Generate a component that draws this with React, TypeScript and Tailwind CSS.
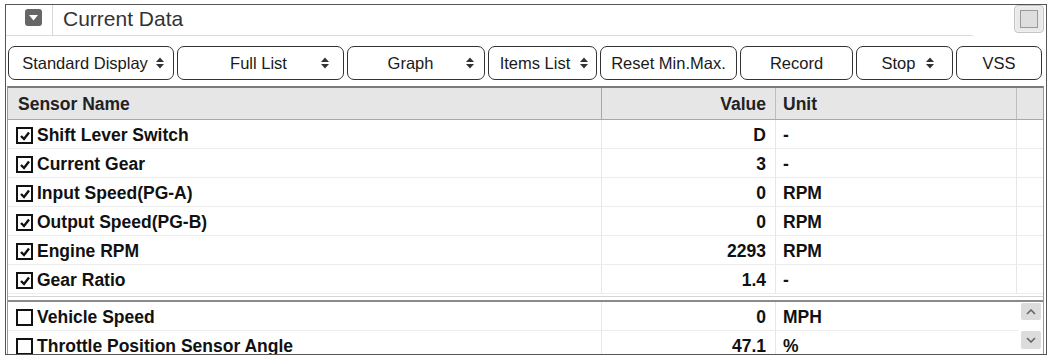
import React from 'react'

type Btn = { label: string; w: string; pad: string; arrow?: boolean }

const buttons: Btn[] = [
  { label: 'Standard Display', w: 'w-[166px]', pad: 'pl-[9px] pr-[9px]', arrow: true },
  { label: 'Full List', w: 'w-[167px]', pad: 'pl-[22px] pr-[14px]', arrow: true },
  { label: 'Graph', w: 'w-[138px]', pad: 'pl-[11px] pr-[10px]', arrow: true },
  { label: 'Items List', w: 'w-[109px]', pad: 'pl-[5px] pr-[8px]', arrow: true },
  { label: 'Reset Min.Max.', w: 'w-[137px]', pad: 'px-[4px]' },
  { label: 'Record', w: 'w-[113px]', pad: 'px-[4px]' },
  { label: 'Stop', w: 'w-[97px]', pad: 'pl-[18px] pr-[18px]', arrow: true },
  { label: 'VSS', w: 'w-[86px]', pad: 'px-[4px]' },
]

const rows = [
  { name: 'Shift Lever Switch', value: 'D', unit: '-', on: true },
  { name: 'Current Gear', value: '3', unit: '-', on: true },
  { name: 'Input Speed(PG-A)', value: '0', unit: 'RPM', on: true },
  { name: 'Output Speed(PG-B)', value: '0', unit: 'RPM', on: true },
  { name: 'Engine RPM', value: '2293', unit: 'RPM', on: true },
  { name: 'Gear Ratio', value: '1.4', unit: '-', on: true },
]

const lower = [
  { name: 'Vehicle Speed', value: '0', unit: 'MPH', on: false },
  { name: 'Throttle Position Sensor Angle', value: '47.1', unit: '%', on: false },
]

function UpDown() {
  return (
    <svg width="8" height="12" viewBox="0 0 8 12" className="shrink-0">
      <path d="M0 5 L4 0.5 L8 5 Z" fill="#333" />
      <path d="M0 7 L4 11.5 L8 7 Z" fill="#333" />
    </svg>
  )
}

function Check({ on }: { on: boolean }) {
  return (
    <span className="w-[17px] h-[17px] border-2 border-[#111] bg-white flex items-center justify-center shrink-0">
      {on && (
        <svg width="12" height="12" viewBox="0 0 12 12">
          <path d="M2 6 L5 9 L10 2.5" fill="none" stroke="#111" strokeWidth="2.4" />
        </svg>
      )}
    </span>
  )
}

function Row({ r, last }: { r: { name: string; value: string; unit: string; on: boolean }; last?: boolean }) {
  return (
    <div className="flex h-[29px] border-b border-[#ececec] text-[17.5px] font-bold text-[#111]">
      <div className="w-[594px] flex items-center gap-[4px] pl-[8px] pt-[3px] border-r border-[#e6e6e6]">
        <Check on={r.on} />
        <span>{r.name}</span>
      </div>
      <div className="w-[174px] flex items-center justify-end pr-[9px] pt-[3px] border-r border-[#e6e6e6]">{r.value}</div>
      <div className={`w-[241px] flex items-center pl-[7px] pt-[3px] ${last ? '' : 'border-r border-[#e6e6e6]'}`}>{r.unit}</div>
      {!last && <div className="w-[26px]" />}
    </div>
  )
}

export default function App() {
  return (
    <div className="w-[1050px] h-[360px] bg-white pt-[4px] pl-[5px] font-['Liberation_Sans',Arial,sans-serif]">
      <div className="w-[1042px] h-[351px] border border-[#555] overflow-hidden flex flex-col">
        {/* Title */}
        <div className="flex h-[31px] shrink-0">
          <div className="flex-1 flex border-b border-[#dcdcdc]">
            <div className="w-[47px] border-r border-[#d8d8d8] flex items-start pt-[4px] pl-[19px]">
              <span className="w-[17px] h-[17px] rounded-[3px] bg-[#666] flex items-center justify-center">
                <svg width="9" height="6" viewBox="0 0 9 6">
                  <path d="M0 0 L9 0 L4.5 5.5 Z" fill="#fff" />
                </svg>
              </span>
            </div>
            <div className="pl-[10px] pt-[3px] text-[21px] text-[#333] leading-[22px]">Current Data</div>
          </div>
          <div className="w-[73px] flex justify-end pr-[2px]">
            <div className="w-[30px] h-[28px] rounded-[4px] border border-[#c4c4c4] bg-[#e9e9e9] flex items-center justify-center shadow-[inset_0_0_2px_#fff]">
              <span className="w-[18px] h-[18px] border border-[#9a9a9a] bg-[#dedede]" />
            </div>
          </div>
        </div>

        {/* Buttons */}
        <div className="flex gap-[3px] mt-[10px] ml-[2px] shrink-0">
          {buttons.map((b) => (
            <div
              key={b.label}
              className={`${b.w} ${b.pad} h-[34px] border border-[#333] rounded-[7px] bg-white flex items-center gap-[4px] text-[16.5px] text-[#1a1a1a]`}
            >
              <span className="flex-1 text-center whitespace-nowrap">{b.label}</span>
              {b.arrow && <UpDown />}
            </div>
          ))}
        </div>

        {/* Table */}
        <div className="mt-[6px] ml-[1px] w-[1037px] flex-1 border-t-2 border-l border-r border-t-[#7a7a7a] border-l-[#9a9a9a] border-r-[#9a9a9a] flex flex-col overflow-hidden">
          <div className="flex h-[32px] bg-[#e6e6e6] border-b border-[#a8a8a8] text-[17.5px] font-bold text-[#222] shrink-0">
            <div className="w-[594px] flex items-center pl-[10px] pt-[1px] border-r border-[#a8a8a8]">Sensor Name</div>
            <div className="w-[174px] flex items-center justify-end pr-[9px] pt-[1px] border-r border-[#bdbdbd]">Value</div>
            <div className="w-[241px] flex items-center pl-[7px] pt-[1px] border-r border-[#bdbdbd]">Unit</div>
            <div className="w-[26px]" />
          </div>
          {rows.map((r) => (
            <Row key={r.name} r={r} />
          ))}
          <div className="h-[2px] shrink-0" />
          <div className="h-px bg-[#d4d4d4] shrink-0" />
          <div className="h-[3px] shrink-0" />
          <div className="h-[2px] bg-[#8a8a8a] shrink-0" />
          <div className="flex flex-1 overflow-hidden">
            <div className="w-[1010px]">
              {lower.map((r) => (
                <Row key={r.name} r={r} last />
              ))}
            </div>
            <div className="w-[25px] flex flex-col pl-[3px] pt-[1px] gap-[11px]">
              <div className="w-[20px] h-[17px] rounded-[2px] bg-[#dcdcdc] flex items-center justify-center">
                <svg width="10" height="6" viewBox="0 0 10 6">
                  <path d="M1 5 L5 1 L9 5" fill="none" stroke="#666" strokeWidth="1.6" />
                </svg>
              </div>
              <div className="w-[20px] h-[18px] rounded-[2px] bg-[#dcdcdc] flex items-center justify-center">
                <svg width="10" height="6" viewBox="0 0 10 6">
                  <path d="M1 1 L5 5 L9 1" fill="none" stroke="#666" strokeWidth="1.6" />
                </svg>
              </div>
            </div>
          </div>
        </div>
      </div>
    </div>
  )
}
